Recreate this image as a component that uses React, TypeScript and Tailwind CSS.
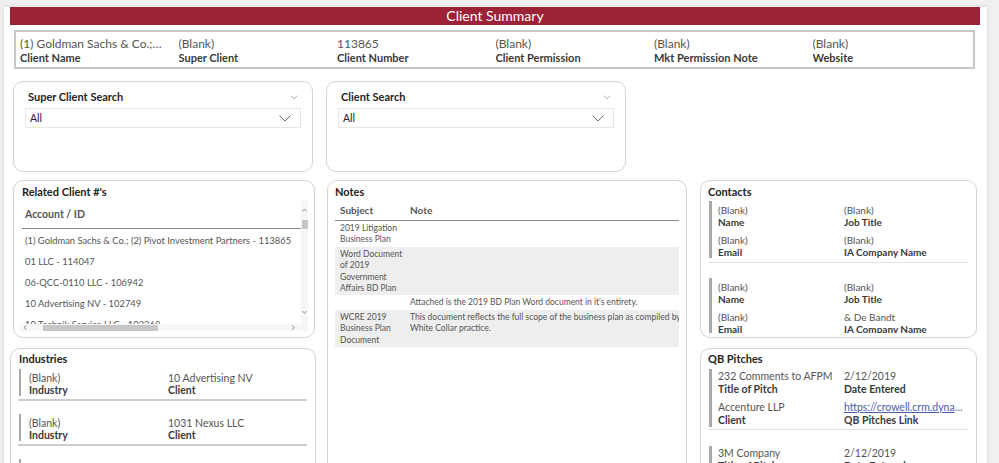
import React from "react";

const relatedClients = [
  "(1) Goldman Sachs & Co.; (2) Pivot Investment Partners - 113865",
  "01 LLC - 114047",
  "06-QCC-0110 LLC - 106942",
  "10 Advertising NV - 102749",
  "10 Technik Service LLC - 103368",
];

const notes = [
  { subject: ["2019 Litigation", "Business Plan"], note: [], shaded: false },
  {
    subject: ["Word Document", "of 2019", "Government", "Affairs BD Plan"],
    note: [],
    shaded: true,
  },
  {
    subject: [],
    note: ["Attached is the 2019 BD Plan Word document in it's entirety."],
    shaded: false,
  },
  {
    subject: ["WCRE 2019", "Business Plan", "Document"],
    note: [
      "This document reflects the full scope of the business plan as compiled by the",
      "White Collar practice.",
    ],
    shaded: true,
  },
];

const contacts = [
  { name: "(Blank)", job: "(Blank)", email: "(Blank)", company: "(Blank)" },
  { name: "(Blank)", job: "(Blank)", email: "(Blank)", company: "& De Bandt" },
];

const industries = [
  { industry: "(Blank)", client: "10 Advertising NV" },
  { industry: "(Blank)", client: "1031 Nexus LLC" },
  { industry: "(Blank)", client: "10 Technik Service LLC" },
];

const pitches = [
  {
    title: "232 Comments to AFPM",
    date: "2/12/2019",
    client: "Accenture LLP",
    link: "https://crowell.crm.dynamics.com/main.aspx?etn=qb_pitch",
  },
  {
    title: "3M Company",
    date: "2/12/2019",
    client: "3M Company",
    link: "https://crowell.crm.dynamics.com/main.aspx?etn=qb_pitch",
  },
];

const summary = [
  { value: "(1) Goldman Sachs & Co.; (2) Pivot Investment Partners", label: "Client Name" },
  { value: "(Blank)", label: "Super Client" },
  { value: "113865", label: "Client Number" },
  { value: "(Blank)", label: "Client Permission" },
  { value: "(Blank)", label: "Mkt Permission Note" },
  { value: "(Blank)", label: "Website" },
];

const SmallChevron = () => (
  <svg width="8" height="5" viewBox="0 0 8 5" fill="none">
    <path d="M0.5 0.5 L4 4 L7.5 0.5" stroke="#b4b4b4" strokeWidth="1" />
  </svg>
);

const DropChevron = () => (
  <svg width="12" height="7" viewBox="0 0 12 7" fill="none">
    <path d="M0.5 0.5 L6 6 L11.5 0.5" stroke="#6b6b6b" strokeWidth="1" />
  </svg>
);

const Caret = ({ dir }: { dir: "up" | "down" | "left" | "right" }) => {
  const d = {
    up: "M0.5 3.5 L2.5 1 L4.5 3.5",
    down: "M0.5 1 L2.5 3.5 L4.5 1",
    left: "M3.5 0.5 L1 2.5 L3.5 4.5",
    right: "M1 0.5 L3.5 2.5 L1 4.5",
  }[dir];
  return (
    <svg width="5" height="5" viewBox="0 0 5 5" fill="none">
      <path d={d} stroke="#8a8a8a" strokeWidth="0.9" />
    </svg>
  );
};

const Slicer = ({ title }: { title: string }) => (
  <div className="h-[91px] w-[300px] rounded-[10px] border border-[#d4d4d4] bg-white px-[11px] pt-[8px]">
    <div className="flex h-[14px] items-center justify-between px-[3px]">
      <span className="text-[11px] font-bold leading-[14px] text-[#252423]">{title}</span>
      <SmallChevron />
    </div>
    <div className="mt-[4px] flex h-[20px] items-center justify-between border border-[#e6e6e6] pl-[4px] pr-[9px]">
      <span className="pt-[1px] text-[10.5px] text-[#252423]">All</span>
      <DropChevron />
    </div>
  </div>
);

const CardTitle = ({ children, className = "" }: { children: React.ReactNode; className?: string }) => (
  <div className={`text-[11px] font-bold leading-[14px] text-[#252423] ${className}`}>{children}</div>
);

const Field = ({
  value,
  label,
  size,
  link = false,
}: {
  value: string;
  label: string;
  size: "sm" | "md" | "lg";
  link?: boolean;
}) => {
  const text =
    size === "sm"
      ? "text-[10px] leading-[12px]"
      : size === "md"
      ? "text-[10.5px] leading-[12px]"
      : "text-[10.5px] leading-[13px]";
  return (
    <div className="min-w-0">
      <div
        className={`truncate ${text} ${
          link ? "text-[#4b5ba8] underline" : "text-[#555]"
        }`}
      >
        {value}
      </div>
      <div className={`truncate font-bold ${text} text-[#3a3a3a]`}>{label}</div>
    </div>
  );
};

export default function App() {
  return (
    <div className="h-[463px] w-full overflow-hidden bg-[#f0f0f0] pl-[4px] pt-[6px] font-['Lato',sans-serif]">
      <div className="h-[600px] w-[983px] bg-white shadow-[0_0_4px_rgba(0,0,0,0.12)]">
        {/* title bar */}
        <div className="ml-[6px] mt-[1px] flex h-[18px] w-[970px] items-center justify-center bg-[#9c2235]">
          <span className="text-[14px] leading-[18px] text-white">Client Summary</span>
        </div>

        {/* summary strip */}
        <div className="ml-[10px] mt-[5px] grid h-[39px] w-[961px] grid-cols-6 border-2 border-[#c8c8c8] pl-[4px] pr-[2px] pt-[5px]">
          {summary.map((s) => (
            <div key={s.label} className="min-w-0 pr-[16px]">
              <div className="truncate text-[12px] leading-[14px] text-[#555]">{s.value}</div>
              <div className="truncate text-[11px] font-bold leading-[14px] text-[#3a3a3a]">
                {s.label}
              </div>
            </div>
          ))}
        </div>

        <div className="ml-[9px] mt-[12px] flex">
          {/* left column */}
          <div className="flex w-[303px] flex-col">
            <Slicer title="Super Client Search" />

            <div className="mt-[8px] h-[158px] w-[302px] rounded-[10px] border border-[#d4d4d4] bg-white pt-[4px]">
              <CardTitle className="pl-[8px]">Related Client #'s</CardTitle>
              <div className="mx-[6px] mt-[2px]">
                <div className="flex">
                  <div className="min-w-0 flex-1">
                    <div className="ml-[2px] flex h-[28px] items-center border-b border-[#8a8a8a] pl-[3px] text-[10.5px] font-bold text-[#555]">
                      Account / ID
                    </div>
                    <div className="h-[95px] overflow-hidden pt-[2px]">
                      {relatedClients.map((c) => (
                        <div
                          key={c}
                          className="flex h-[21px] items-center whitespace-nowrap pl-[5px] text-[9.4px] text-[#555]"
                        >
                          {c}
                        </div>
                      ))}
                    </div>
                  </div>
                  <div className="flex w-[7px] flex-col items-center bg-[#f6f6f6]">
                    <div className="mt-[7px]">
                      <Caret dir="up" />
                    </div>
                    <div className="mt-[7px] h-[9px] w-[6px] bg-[#c6c6c6]" />
                    <div className="flex-1" />
                    <div className="mb-[9px]">
                      <Caret dir="down" />
                    </div>
                  </div>
                </div>
                <div className="flex h-[7px] items-center bg-[#f6f6f6] pl-[3px] pr-[12px]">
                  <Caret dir="left" />
                  <div className="ml-[15px] h-[6px] w-[115px] bg-[#c6c6c6]" />
                  <div className="flex-1" />
                  <Caret dir="right" />
                </div>
              </div>
            </div>

            <div className="-ml-[3px] mt-[10px] h-[200px] w-[306px] rounded-[10px] border border-[#d4d4d4] bg-white pt-[3px]">
              <CardTitle className="pl-[8px]">Industries</CardTitle>
              <div className="ml-[7px] mr-[8px] mt-[3px] h-[94px] overflow-hidden">
                {industries.map((i, idx) => (
                  <div key={idx} className={idx > 0 ? "mt-[13px]" : ""}>
                    <div className="ml-[1px] grid grid-cols-[139px_1fr] border-l-2 border-[#a8a8a8] pl-[8px] pt-[3px]">
                      <Field value={i.industry} label="Industry" size="md" />
                      <Field value={i.client} label="Client" size="md" />
                    </div>
                    <div className="mt-[3px] h-[2px] bg-[#cdcdcd]" />
                  </div>
                ))}
              </div>
            </div>
          </div>

          {/* middle column */}
          <div className="ml-[10px] flex w-[361px] flex-col">
            <Slicer title="Client Search" />

            <div className="ml-[1px] mt-[8px] h-[300px] w-[360px] rounded-[10px] border border-[#d4d4d4] bg-white pt-[4px]">
              <CardTitle className="pl-[7px]">Notes</CardTitle>
              <div className="mx-[7px] mt-[2px] overflow-hidden">
                <div className="flex h-[20px] items-center border-b border-[#8a8a8a] text-[10px] font-bold text-[#555]">
                  <div className="w-[70px] pl-[5px]">Subject</div>
                  <div className="pl-[5px]">Note</div>
                </div>
                {notes.map((n, idx) => (
                  <div
                    key={idx}
                    className={`flex pb-[1px] pt-[2px] text-[8.5px] leading-[11.4px] text-[#555] ${
                      n.shaded ? "bg-[#eeeeee]" : "bg-white"
                    }`}
                  >
                    <div className="w-[70px] shrink-0 pl-[5px]">
                      {n.subject.map((l) => (
                        <div key={l}>{l}</div>
                      ))}
                    </div>
                    <div className="whitespace-nowrap pl-[5px]">
                      {n.note.map((l) => (
                        <div key={l}>{l}</div>
                      ))}
                    </div>
                  </div>
                ))}
              </div>
            </div>
          </div>

          {/* right column */}
          <div className="ml-[13px] flex w-[277px] flex-col">
            <div className="mt-[99px] h-[158px] w-[277px] rounded-[10px] border border-[#d4d4d4] bg-white pt-[4px]">
              <CardTitle className="pl-[7px]">Contacts</CardTitle>
              <div className="mx-[7px] mt-[2px] h-[132px] overflow-hidden">
                {contacts.map((c, idx) => (
                  <div key={idx} className={idx > 0 ? "mt-[15px]" : ""}>
                    <div className="ml-[1px] grid grid-cols-[126px_1fr] gap-y-[6px] border-l-[3px] border-[#a8a8a8] pl-[6px] pt-[3px]">
                      <Field value={c.name} label="Name" size="sm" />
                      <Field value={c.job} label="Job Title" size="sm" />
                      <Field value={c.email} label="Email" size="sm" />
                      <Field value={c.company} label="IA Company Name" size="sm" />
                    </div>
                    <div className="mt-[4px] h-px bg-[#e3e3e3]" />
                  </div>
                ))}
              </div>
            </div>

            <div className="mt-[10px] h-[200px] w-[277px] rounded-[10px] border border-[#d4d4d4] bg-white pt-[3px]">
              <CardTitle className="pl-[7px]">QB Pitches</CardTitle>
              <div className="mx-[7px] mt-[3px]">
                {pitches.map((p, idx) => (
                  <div key={idx} className={idx > 0 ? "mt-[16px]" : ""}>
                    <div className="ml-[1px] grid grid-cols-[126px_1fr] gap-y-[5px] border-l-[3px] border-[#a8a8a8] pl-[6px] pt-[1px]">
                      <Field value={p.title} label="Title of Pitch" size="lg" />
                      <Field value={p.date} label="Date Entered" size="lg" />
                      <Field value={p.client} label="Client" size="lg" />
                      <Field value={p.link} label="QB Pitches Link" size="lg" link />
                    </div>
                    <div className="mt-[2px] h-px bg-[#e3e3e3]" />
                  </div>
                ))}
              </div>
            </div>
          </div>
        </div>
      </div>
    </div>
  );
}
